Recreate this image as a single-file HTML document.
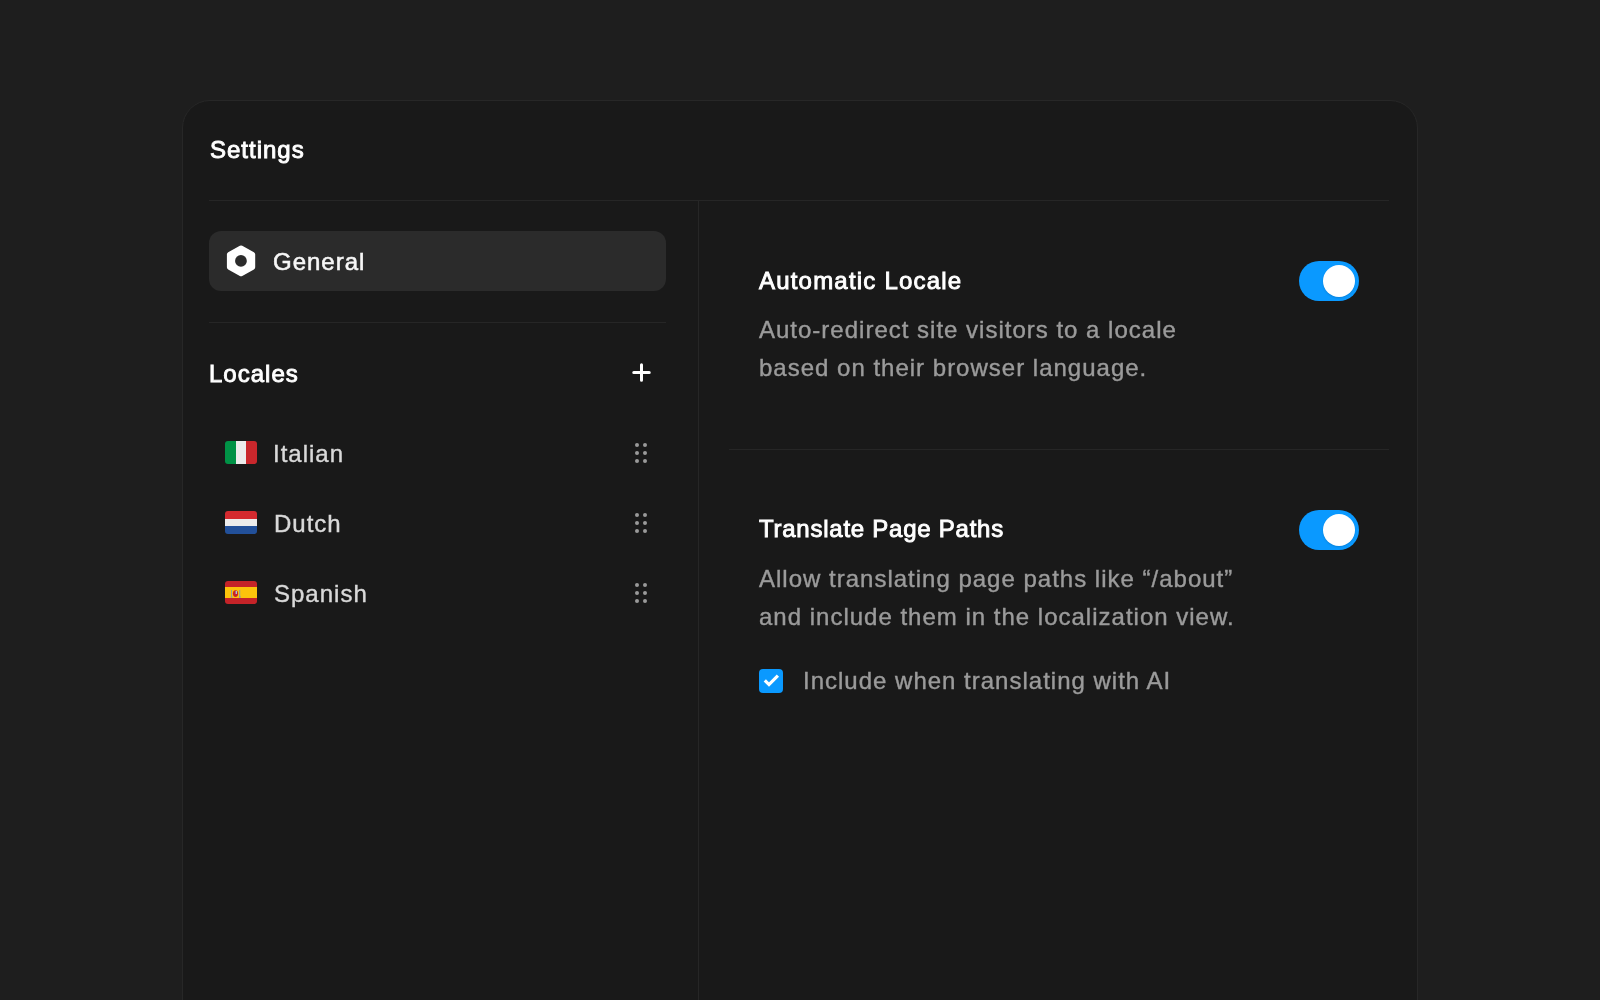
<!DOCTYPE html>
<html>
<head>
<meta charset="utf-8">
<style>
html,body{margin:0;padding:0;}
body{width:1600px;height:1000px;background:#1e1e1e;position:relative;overflow:hidden;font-family:"Liberation Sans",sans-serif;-webkit-font-smoothing:antialiased;}
.abs{position:absolute;}
.card{position:absolute;left:182px;top:100px;width:1234px;height:1000px;border:1px solid #272727;border-radius:28px;background:#191919;}
.t{position:absolute;font-size:24px;line-height:30px;white-space:nowrap;letter-spacing:1px;will-change:transform;-webkit-text-stroke:0.4px currentColor;}
.title{font-weight:normal;letter-spacing:1px;-webkit-text-stroke:0.9px currentColor;}
.title{color:#ffffff;}
.hline{position:absolute;height:1px;background:#262626;}
.vline{position:absolute;width:1px;background:#262626;}
.sel{position:absolute;left:209px;top:231px;width:457px;height:60px;border-radius:12px;background:#2b2b2b;}
.flag{position:absolute;left:225px;width:32px;height:23px;border-radius:3px;overflow:hidden;}
.desc{position:absolute;font-size:24px;line-height:38px;color:#9b9b9b;white-space:nowrap;letter-spacing:1px;will-change:transform;-webkit-text-stroke:0.4px currentColor;}
.toggle{position:absolute;left:1299px;width:60px;height:40px;border-radius:20px;background:#0a99ff;}
.knob{position:absolute;left:24px;top:4px;width:32px;height:32px;border-radius:50%;background:#fff;box-shadow:0 1px 2px rgba(0,0,0,0.15);}
</style>
</head>
<body>
<div class="card"></div>

<div class="t title" style="left:210px;top:135px;">Settings</div>
<div class="hline" style="left:209px;top:200px;width:1180px;"></div>
<div class="vline" style="left:698px;top:201px;height:799px;"></div>

<div class="sel"></div>
<svg class="abs" style="left:225px;top:244px;" width="32" height="34" viewBox="0 0 32 34">
  <path d="M16.05 3.9 L27.7 10.35 L27.7 23.25 L16.05 29.7 L4.4 23.25 L4.4 10.35 Z" fill="#fff" stroke="#fff" stroke-width="5" stroke-linejoin="round"/>
  <circle cx="15.95" cy="16.9" r="5.9" fill="#2b2b2b"/>
</svg>
<div class="t" style="left:273px;top:247px;color:#f7f7f7;-webkit-text-stroke:0.55px currentColor;">General</div>

<div class="hline" style="left:209px;top:322px;width:457px;"></div>

<div class="t title" style="left:209px;top:359px;">Locales</div>
<svg class="abs" style="left:630px;top:361px;" width="23" height="23" viewBox="0 0 23 23">
  <path d="M11.5 3.75 V19.25 M3.75 11.5 H19.25" stroke="#fff" stroke-width="3" stroke-linecap="round"/>
</svg>

<!-- Italian -->
<div class="flag" style="top:441px;background:linear-gradient(90deg,#009246 0,#009246 33.3%,#ececec 33.3%,#ececec 66.6%,#c9272c 66.6%);"></div>
<div class="t" style="left:273px;top:439px;color:#d9d9d9;">Italian</div>
<!-- Dutch -->
<div class="flag" style="top:511px;background:linear-gradient(180deg,#d42a2f 0,#d42a2f 34%,#ececec 34%,#ececec 67%,#22509a 67%);"></div>
<div class="t" style="left:274px;top:509px;color:#d9d9d9;">Dutch</div>
<!-- Spanish -->
<div class="flag" style="top:581px;background:linear-gradient(180deg,#c52328 0,#c52328 28%,#fcc30b 28%,#fcc30b 72%,#c52328 72%);"></div>
<svg class="abs" style="left:230px;top:589px;" width="12" height="10" viewBox="0 0 12 10">
  <rect x="1" y="1" width="1" height="7" fill="#8e9aa8"/><rect x="0.8" y="7.2" width="1.6" height="1.6" fill="#8e9aa8"/>
  <rect x="9.2" y="1" width="1" height="7" fill="#8e9aa8"/><rect x="9" y="7.2" width="1.6" height="1.6" fill="#8e9aa8"/>
  <ellipse cx="5.5" cy="4.6" rx="2.6" ry="3.4" fill="#c8232a"/>
  <rect x="5.6" y="2" width="1.4" height="3" fill="#a9c2d6"/>
</svg>
<div class="t" style="left:274px;top:579px;color:#d9d9d9;">Spanish</div>

<!-- drag handles -->
<svg class="abs" style="left:630px;top:438px;" width="22" height="170" viewBox="0 0 22 170">
  <g fill="#9a9a9a">
    <circle cx="7" cy="7" r="2"/><circle cx="15" cy="7" r="2"/>
    <circle cx="7" cy="15" r="2"/><circle cx="15" cy="15" r="2"/>
    <circle cx="7" cy="23" r="2"/><circle cx="15" cy="23" r="2"/>
    <circle cx="7" cy="77" r="2"/><circle cx="15" cy="77" r="2"/>
    <circle cx="7" cy="85" r="2"/><circle cx="15" cy="85" r="2"/>
    <circle cx="7" cy="93" r="2"/><circle cx="15" cy="93" r="2"/>
    <circle cx="7" cy="147" r="2"/><circle cx="15" cy="147" r="2"/>
    <circle cx="7" cy="155" r="2"/><circle cx="15" cy="155" r="2"/>
    <circle cx="7" cy="163" r="2"/><circle cx="15" cy="163" r="2"/>
  </g>
</svg>

<!-- right panel -->
<div class="t title" style="left:759px;top:266px;letter-spacing:1.2px;">Automatic Locale</div>
<div class="toggle" style="top:261px;"><div class="knob"></div></div>
<div class="desc" style="left:759px;top:311px;">Auto-redirect site visitors to a locale<br>based on their browser language.</div>

<div class="hline" style="left:729px;top:449px;width:660px;"></div>

<div class="t title" style="left:759px;top:514px;letter-spacing:0.75px;">Translate Page Paths</div>
<div class="toggle" style="top:510px;"><div class="knob"></div></div>
<div class="desc" style="left:759px;top:560px;">Allow translating page paths like “/about”<br>and include them in the localization view.</div>

<svg class="abs" style="left:759px;top:669px;" width="24" height="24" viewBox="0 0 24 24">
  <rect x="0" y="0" width="24" height="24" rx="4" fill="#0a99ff"/>
  <path d="M5.8 11.4 L10 15.6 L18.9 6.7" fill="none" stroke="#fff" stroke-width="3.2" stroke-linecap="butt" stroke-linejoin="miter"/>
</svg>
<div class="t" style="left:803px;top:666px;color:#9b9b9b;">Include when translating with AI</div>

</body>
</html>
